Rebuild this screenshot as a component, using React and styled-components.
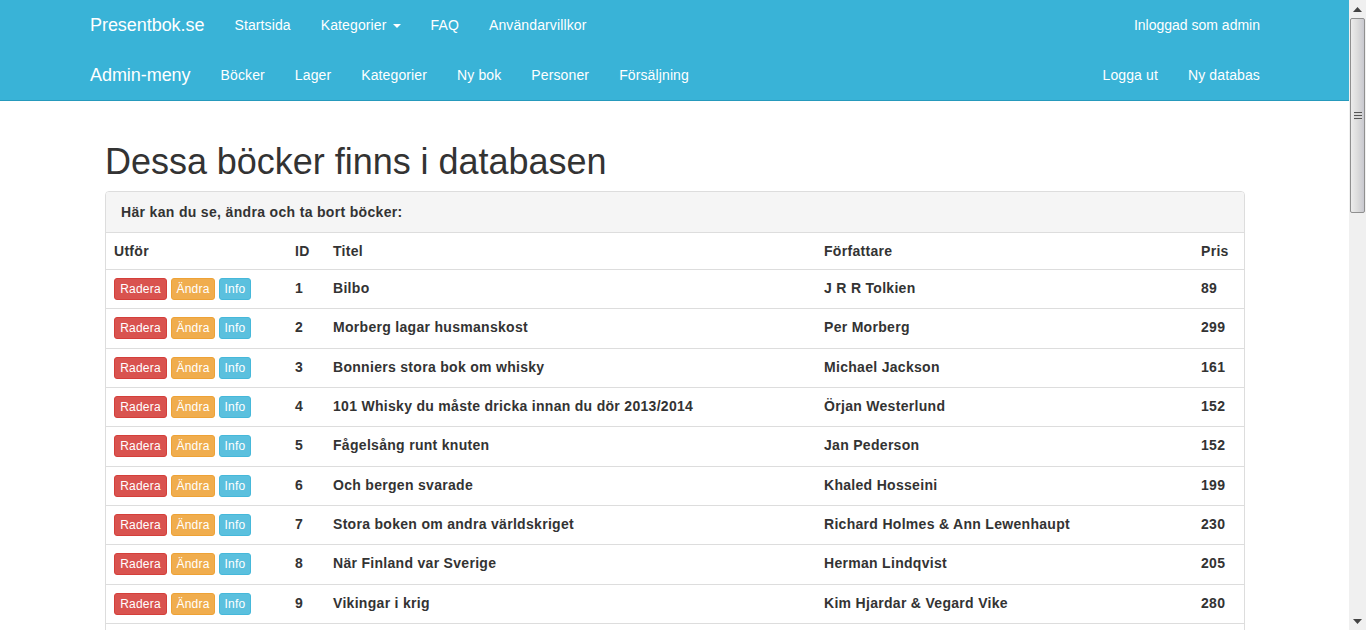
import React from "react";
import styled, { createGlobalStyle } from "styled-components";

const books = [
  [1, "Bilbo", "J R R Tolkien", 89],
  [2, "Morberg lagar husmanskost", "Per Morberg", 299],
  [3, "Bonniers stora bok om whisky", "Michael Jackson", 161],
  [4, "101 Whisky du måste dricka innan du dör 2013/2014", "Örjan Westerlund", 152],
  [5, "Fågelsång runt knuten", "Jan Pederson", 152],
  [6, "Och bergen svarade", "Khaled Hosseini", 199],
  [7, "Stora boken om andra världskriget", "Richard Holmes & Ann Lewenhaupt", 230],
  [8, "När Finland var Sverige", "Herman Lindqvist", 205],
  [9, "Vikingar i krig", "Kim Hjardar & Vegard Vike", 280],
];

const App = () => {
  return (
    <Screen>
      <GlobalStyle />
      <Page>
        <Navbar>
          <NavRow>
            <NavGroup>
              <Brand>Presentbok.se</Brand>
              <NavLink>Startsida</NavLink>
              <NavLink>
                Kategorier <Caret />
              </NavLink>
              <NavLink>FAQ</NavLink>
              <NavLink>Användarvillkor</NavLink>
            </NavGroup>
            <NavGroup>
              <NavLink $flat>Inloggad som admin</NavLink>
            </NavGroup>
          </NavRow>
          <NavRow>
            <NavGroup>
              <Brand>Admin-meny</Brand>
              <NavLink>Böcker</NavLink>
              <NavLink>Lager</NavLink>
              <NavLink>Kategorier</NavLink>
              <NavLink>Ny bok</NavLink>
              <NavLink>Personer</NavLink>
              <NavLink>Försäljning</NavLink>
            </NavGroup>
            <NavGroup>
              <NavLink>Logga ut</NavLink>
              <NavLink>Ny databas</NavLink>
            </NavGroup>
          </NavRow>
        </Navbar>
        <Container>
          <Title>Dessa böcker finns i databasen</Title>
          <Panel>
            <PanelHeading>Här kan du se, ändra och ta bort böcker:</PanelHeading>
            <Table>
              <colgroup>
                <col width="181" />
                <col width="38" />
                <col width="491" />
                <col width="377" />
                <col width="51" />
              </colgroup>
              <thead>
                <tr>
                  <Th>Utför</Th>
                  <Th>ID</Th>
                  <Th>Titel</Th>
                  <Th>Författare</Th>
                  <Th>Pris</Th>
                </tr>
              </thead>
              <tbody>
                {books.map(([id, title, author, price]) => (
                  <tr key={id}>
                    <Td>
                      <Actions>
                        <Btn $w={53} $bg="#d9534f" $border="#d43f3a">Radera</Btn>
                        <Btn $w={44} $bg="#f0ad4e" $border="#eea236">Ändra</Btn>
                        <Btn $w={32} $bg="#5bc0de" $border="#46b8da">Info</Btn>
                      </Actions>
                    </Td>
                    <Td $text>{id}</Td>
                    <Td $text>{title}</Td>
                    <Td $text>{author}</Td>
                    <Td $text>{price}</Td>
                  </tr>
                ))}
              </tbody>
            </Table>
          </Panel>
        </Container>
      </Page>
      <ScrollBar>
        <ArrowButton>
          <svg width="9" height="5" viewBox="0 0 9 5">
            <path d="M4.5 0 L9 5 L0 5 Z" fill="#444" />
          </svg>
        </ArrowButton>
        <Thumb>
          <Grip />
        </Thumb>
        <Track />
        <ArrowButton>
          <svg width="9" height="5" viewBox="0 0 9 5">
            <path d="M0 0 L9 0 L4.5 5 Z" fill="#444" />
          </svg>
        </ArrowButton>
      </ScrollBar>
    </Screen>
  );
};

const GlobalStyle = createGlobalStyle`
  html, body {
    margin: 0;
    padding: 0;
    height: 100%;
    overflow: hidden;
    background: #fff;
  }
  body {
    font-family: "Liberation Sans", Arial, sans-serif;
    font-size: 14px;
    color: #333;
  }
`;
const Screen = styled.div`
  display: flex;
  width: 1366px;
  height: 630px;
  overflow: hidden;
`;
const Page = styled.div`
  flex: 1;
  min-width: 0;
  overflow: hidden;
`;
const Navbar = styled.nav`
  background: #39b3d7;
  border-bottom: 1px solid #269abc;
  padding: 0 89px 0 90px;
`;
const NavRow = styled.div`
  display: flex;
  justify-content: space-between;
  align-items: center;
  height: 50px;
`;
const NavGroup = styled.div`
  display: flex;
  align-items: center;
  gap: 30px;
`;
const Brand = styled.a`
  color: #fff;
  font-size: 18px;
  line-height: 20px;
  letter-spacing: -0.05px;
`;
const NavLink = styled.a`
  color: #fff;
  font-size: 14px;
  line-height: 20px;
  letter-spacing: ${(p) => (p.$flat ? "0" : "0.12px")};
`;
const Caret = styled.span`
  display: inline-block;
  width: 0;
  height: 0;
  margin-left: 2px;
  vertical-align: middle;
  border-top: 4px solid #fff;
  border-left: 4px solid transparent;
  border-right: 4px solid transparent;
`;
const Container = styled.div`
  padding: 0 104px 0 105px;
`;
const Title = styled.h1`
  margin: 41px 0 9px;
  font-size: 36px;
  font-weight: 500;
  line-height: 40px;
  letter-spacing: -0.03px;
  color: #333;
`;
const Panel = styled.div`
  border: 1px solid #ddd;
  border-radius: 4px;
  overflow: hidden;
  padding-bottom: 40px;
`;
const PanelHeading = styled.div`
  height: 40px;
  line-height: 40px;
  padding: 0 15px;
  background: #f5f5f5;
  border-bottom: 1px solid #ddd;
  font-weight: 700;
  letter-spacing: 0.33px;
`;
const Table = styled.table`
  width: 100%;
  table-layout: fixed;
  border-collapse: collapse;
`;
const Th = styled.th`
  height: 36px;
  padding: 0 8px;
  text-align: left;
  font-weight: 700;
  letter-spacing: 0.3px;
  border-bottom: 1px solid #ddd;
`;
const Td = styled.td`
  box-sizing: border-box;
  height: 39.33px;
  padding: 0 8px ${(p) => (p.$text ? "2px" : "0")};
  font-weight: 700;
  letter-spacing: 0.3px;
  border-bottom: 1px solid #ddd;
`;
const Actions = styled.div`
  display: flex;
  gap: 4px;
`;
const Btn = styled.button`
  width: ${(p) => p.$w}px;
  height: 22px;
  padding: 0;
  font-family: inherit;
  font-size: 12px;
  line-height: 18px;
  letter-spacing: 0.2px;
  color: #fff;
  background: ${(p) => p.$bg};
  border: 1px solid ${(p) => p.$border};
  border-radius: 3px;
`;
const ScrollBar = styled.div`
  display: flex;
  flex-direction: column;
  width: 17px;
  flex-shrink: 0;
  background: #f0f0f0;
`;
const ArrowButton = styled.div`
  display: flex;
  align-items: center;
  justify-content: center;
  height: 18px;
`;
const Thumb = styled.div`
  display: flex;
  align-items: center;
  justify-content: center;
  height: 193px;
  margin: 0 1px;
  border: 1px solid #8f8f8f;
  border-radius: 2px;
  background: linear-gradient(to right, #ececec, #dcdcdc 50%, #c8c8cf);
`;
const Grip = styled.div`
  width: 8px;
  height: 8px;
  background: repeating-linear-gradient(to bottom, #555 0 1px, #d8d8d8 1px 3px);
`;
const Track = styled.div`
  flex: 1;
`;

export default App;
